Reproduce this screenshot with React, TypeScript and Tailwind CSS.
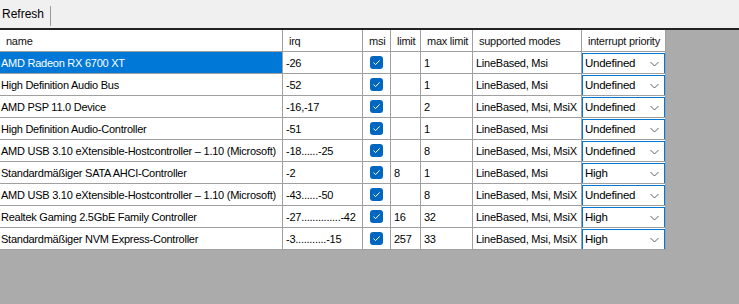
import React from "react";

type Row = {
  name: string;
  irq: string;
  limit: string;
  max: string;
  modes: string;
  priority: string;
};

const rows: Row[] = [
  { name: "AMD Radeon RX 6700 XT", irq: "-26", limit: "", max: "1", modes: "LineBased, Msi", priority: "Undefined" },
  { name: "High Definition Audio Bus", irq: "-52", limit: "", max: "1", modes: "LineBased, Msi", priority: "Undefined" },
  { name: "AMD PSP 11.0 Device", irq: "-16,-17", limit: "", max: "2", modes: "LineBased, Msi, MsiX", priority: "Undefined" },
  { name: "High Definition Audio-Controller", irq: "-51", limit: "", max: "1", modes: "LineBased, Msi", priority: "Undefined" },
  { name: "AMD USB 3.10 eXtensible-Hostcontroller – 1.10 (Microsoft)", irq: "-18......-25", limit: "", max: "8", modes: "LineBased, Msi, MsiX", priority: "Undefined" },
  { name: "Standardmäßiger SATA AHCI-Controller", irq: "-2", limit: "8", max: "1", modes: "LineBased, Msi", priority: "High" },
  { name: "AMD USB 3.10 eXtensible-Hostcontroller – 1.10 (Microsoft)", irq: "-43......-50", limit: "", max: "8", modes: "LineBased, Msi, MsiX", priority: "Undefined" },
  { name: "Realtek Gaming 2.5GbE Family Controller", irq: "-27..............-42", limit: "16", max: "32", modes: "LineBased, Msi, MsiX", priority: "High" },
  { name: "Standardmäßiger NVM Express-Controller", irq: "-3...........-15", limit: "257", max: "33", modes: "LineBased, Msi, MsiX", priority: "High" },
];

const cols = "grid grid-cols-[283px_80px_28px_30px_52px_109px_84px]";
const cell = "h-[22px] border-r border-b border-[#a0a0a0] flex items-center overflow-hidden whitespace-nowrap pt-px";

const headers = ["name", "irq", "msi", "limit", "max limit", "supported modes", "interrupt priority"];

function Check() {
  return (
    <div className="w-[13px] h-[13px] rounded-[3px] bg-[#0067c0] flex items-center justify-center">
      <svg width="9" height="9" viewBox="0 0 9 9">
        <path d="M1.5 4.6 L3.6 6.6 L7.6 2.4" fill="none" stroke="#ffffff" strokeWidth="1" />
      </svg>
    </div>
  );
}

function Combo({ value }: { value: string }) {
  return (
    <div className="w-[83px] h-[21px] border border-[#0078d7] bg-white flex items-center justify-between pl-[2px] pr-[5px]">
      <span className="pt-px text-[11.5px]">{value}</span>
      <svg width="9" height="6" viewBox="0 0 9 6">
        <path d="M0.5 1 L4.5 5 L8.5 1" fill="none" stroke="#606060" strokeWidth="1" />
      </svg>
    </div>
  );
}

export default function App() {
  return (
    <div
      className="w-[739px] h-[304px] flex flex-col text-[11px] tracking-[-0.25px] text-black overflow-hidden"
      style={{ fontFamily: '"Liberation Sans", Arial, sans-serif' }}
    >
      {/* Toolbar */}
      <div className="h-[28px] bg-[#f0f0f0] flex items-center">
        <span className="pl-[2px] pr-[6px] text-[12px] tracking-normal">Refresh</span>
        <div className="w-px h-[20px] bg-[#9a9a9a] mt-[3px]" />
      </div>
      <div className="h-[2px] bg-[#222222]" />

      {/* Grid area */}
      <div className="flex-1 bg-[#ababab]">
        <div className={cols + " w-[666px] bg-white"}>
          {headers.map((h) => (
            <div key={h} className={cell + " pl-[6px] text-[#111]"}>
              {h}
            </div>
          ))}
          {rows.map((r, i) => (
            <React.Fragment key={i}>
              <div
                className={
                  cell +
                  " pl-[1px] " +
                  (i === 0 ? "bg-[#0078d7] text-white" : "")
                }
              >
                {r.name}
              </div>
              <div className={cell + " pl-[3px]"}>{r.irq}</div>
              <div className={cell + " justify-center !pt-0"}>
                <Check />
              </div>
              <div className={cell + " pl-[3px]"}>{r.limit}</div>
              <div className={cell + " pl-[3px]"}>{r.max}</div>
              <div className={cell + " pl-[3px]"}>{r.modes}</div>
              <div className={cell + " items-start !pt-px"}>
                <Combo value={r.priority} />
              </div>
            </React.Fragment>
          ))}
        </div>
      </div>
    </div>
  );
}
